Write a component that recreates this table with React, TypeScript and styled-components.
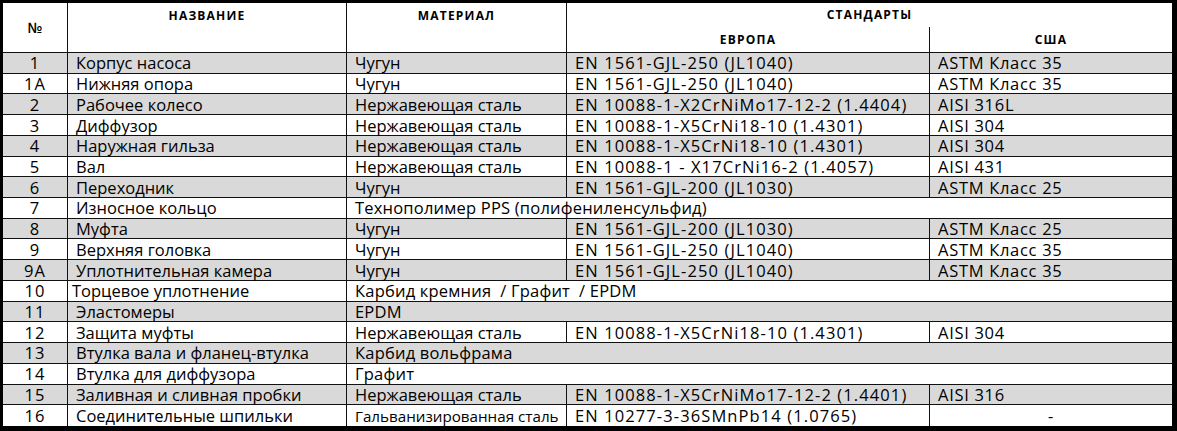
import { FC } from 'react';
import styled, { createGlobalStyle } from 'styled-components';

type Part = {
  no: string;
  name: string;
  material: string;
  europe?: string;
  usa?: string;
  nameIndent?: number;
  smallMaterial?: boolean;
};

const parts: Part[] = [
  { no: '1', name: 'Корпус насоса', material: 'Чугун', europe: 'EN 1561-GJL-250 (JL1040)', usa: 'ASTM Класс 35' },
  { no: '1A', name: 'Нижняя опора', material: 'Чугун', europe: 'EN 1561-GJL-250 (JL1040)', usa: 'ASTM Класс 35' },
  { no: '2', name: 'Рабочее колесо', material: 'Нержавеющая сталь', europe: 'EN 10088-1-X2CrNiMo17-12-2 (1.4404)', usa: 'AISI 316L' },
  { no: '3', name: 'Диффузор', material: 'Нержавеющая сталь', europe: 'EN 10088-1-X5CrNi18-10 (1.4301)', usa: 'AISI 304' },
  { no: '4', name: 'Наружная гильза', material: 'Нержавеющая сталь', europe: 'EN 10088-1-X5CrNi18-10 (1.4301)', usa: 'AISI 304' },
  { no: '5', name: 'Вал', material: 'Нержавеющая сталь', europe: 'EN 10088-1 - X17CrNi16-2 (1.4057)', usa: 'AISI 431' },
  { no: '6', name: 'Переходник', material: 'Чугун', europe: 'EN 1561-GJL-200 (JL1030)', usa: 'ASTM Класс 25' },
  { no: '7', name: 'Износное кольцо', material: 'Технополимер PPS (полифениленсульфид)' },
  { no: '8', name: 'Муфта', material: 'Чугун', europe: 'EN 1561-GJL-200 (JL1030)', usa: 'ASTM Класс 25' },
  { no: '9', name: 'Верхняя головка', material: 'Чугун', europe: 'EN 1561-GJL-250 (JL1040)', usa: 'ASTM Класс 35' },
  { no: '9A', name: 'Уплотнительная камера', material: 'Чугун', europe: 'EN 1561-GJL-250 (JL1040)', usa: 'ASTM Класс 35' },
  { no: '10', name: 'Торцевое уплотнение', material: 'Карбид кремния  / Графит  / EPDM', nameIndent: 4 },
  { no: '11', name: 'Эластомеры', material: 'EPDM' },
  { no: '12', name: 'Защита муфты', material: 'Нержавеющая сталь', europe: 'EN 10088-1-X5CrNi18-10 (1.4301)', usa: 'AISI 304' },
  { no: '13', name: 'Втулка вала и фланец-втулка', material: 'Карбид вольфрама' },
  { no: '14', name: 'Втулка для диффузора', material: 'Графит' },
  { no: '15', name: 'Заливная и сливная пробки', material: 'Нержавеющая сталь', europe: 'EN 10088-1-X5CrNiMo17-12-2 (1.4401)', usa: 'AISI 316' },
  { no: '16', name: 'Соединительные шпильки', material: 'Гальванизированная сталь', europe: 'EN 10277-3-36SMnPb14 (1.0765)', usa: '-', smallMaterial: true },
];

const App: FC = () => {
  const lastIndex = parts.length - 1;
  return (
    <>
      <GlobalStyle />
      <Frame>
        <Sheet>
          <HeadCell $rows={2}>
            <NoMark>№</NoMark>
          </HeadCell>
          <HeadCell $rows={2} $top>НАЗВАНИЕ</HeadCell>
          <HeadCell $rows={2} $top>МАТЕРИАЛ</HeadCell>
          <HeadCell $cols={2} $noBottom $last>
            СТАНДАРТЫ
          </HeadCell>
          <HeadCell>ЕВРОПА</HeadCell>
          <HeadCell $last>США</HeadCell>

          {parts.map((p, i) => {
            const shade = i % 2 === 0;
            const end = i === lastIndex;
            const merged = p.europe === undefined;
            return [
              <Cell key={`${p.no}-n`} $shade={shade} $end={end} $align="center" $spacing={1}>
                {p.no}
              </Cell>,
              <Cell key={`${p.no}-t`} $shade={shade} $end={end} $pad={p.nameIndent ?? 8}>
                {p.name}
              </Cell>,
              <Cell
                key={`${p.no}-m`}
                $shade={shade}
                $end={end}
                $span={merged ? 3 : 1}
                $last={merged}
                $small={p.smallMaterial}
                $spacing={merged ? 0.2 : 0}
              >
                {p.material}
              </Cell>,
              !merged && (
                <Cell key={`${p.no}-e`} $shade={shade} $end={end} $spacing={1.1}>
                  {p.europe}
                </Cell>
              ),
              !merged && (
                <Cell
                  key={`${p.no}-u`}
                  $shade={shade}
                  $end={end}
                  $last
                  $spacing={0.7}
                  $align={p.usa === '-' ? 'center' : 'left'}
                >
                  {p.usa}
                </Cell>
              ),
            ];
          })}
        </Sheet>
      </Frame>
    </>
  );
};

export default App;

const GlobalStyle = createGlobalStyle`
  html, body {
    margin: 0;
    padding: 0;
    background: #ffffff;
  }
  body {
    font-family: 'Open Sans', 'Noto Sans', 'DejaVu Sans', sans-serif;
    color: #000000;
  }
`;

const Frame = styled.div`
  width: 1177px;
  height: 431px;
  box-sizing: border-box;
  border-style: solid;
  border-color: #000000;
  border-width: 3px 5px 5px 3px;
  background: #ffffff;
`;

const Sheet = styled.div`
  display: grid;
  grid-template-columns: 65px 279px 220px 363px 242px;
  grid-template-rows: 24px 26px repeat(18, 1fr);
  height: 100%;
`;

const HeadCell = styled.div<{
  $rows?: number;
  $cols?: number;
  $top?: boolean;
  $noBottom?: boolean;
  $last?: boolean;
}>`
  grid-row: span ${(p) => p.$rows ?? 1};
  grid-column: span ${(p) => p.$cols ?? 1};
  display: flex;
  justify-content: center;
  align-items: ${(p) => (p.$top ? 'flex-start' : 'center')};
  padding-top: ${(p) => (p.$top ? '6px' : '0')};
  box-sizing: border-box;
  border-right: ${(p) => (p.$last ? 'none' : '1px solid #111')};
  border-bottom: ${(p) => (p.$noBottom ? 'none' : '1px solid #111')};
  font-size: 12px;
  font-weight: 700;
  letter-spacing: 1.2px;
  line-height: 14px;
  color: #000000;
`;

const NoMark = styled.span`
  font-size: 14.5px;
  font-weight: 600;
  letter-spacing: 0;
`;

const Cell = styled.div<{
  $shade?: boolean;
  $end?: boolean;
  $last?: boolean;
  $span?: number;
  $align?: 'left' | 'center';
  $pad?: number;
  $small?: boolean;
  $spacing?: number;
}>`
  grid-column: span ${(p) => p.$span ?? 1};
  display: flex;
  align-items: center;
  justify-content: ${(p) => (p.$align === 'center' ? 'center' : 'flex-start')};
  padding-left: ${(p) => (p.$align === 'center' ? 0 : p.$pad ?? 8)}px;
  padding-top: 1px;
  box-sizing: border-box;
  min-height: 0;
  background: ${(p) => (p.$shade ? '#d9d9d9' : '#ffffff')};
  border-right: ${(p) => (p.$last ? 'none' : '1px solid #111')};
  border-bottom: ${(p) => (p.$end ? 'none' : '1px solid #111')};
  font-size: ${(p) => (p.$small ? '15.2px' : '16.5px')};
  letter-spacing: ${(p) => p.$spacing ?? 0}px;
  line-height: 18px;
  white-space: pre;
  color: #000000;
`;
